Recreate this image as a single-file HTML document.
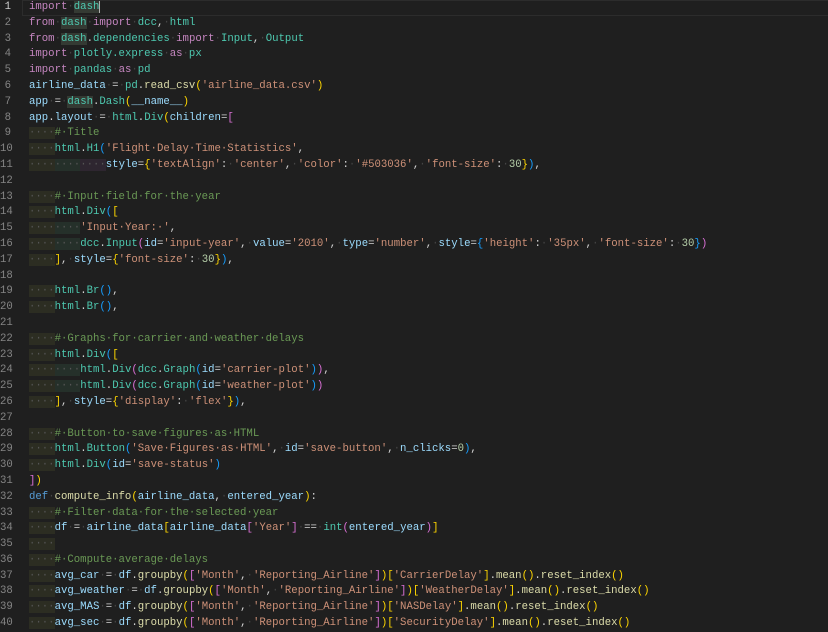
<!DOCTYPE html>
<html><head><meta charset="utf-8"><style>
body{margin:0;background:#1f1f1f;width:828px;height:630px;overflow:hidden;font-family:"Liberation Mono",monospace;font-size:10.67px;}
.g{position:absolute;left:0;top:0;width:11px;text-align:right;color:#858585;line-height:15.8px;white-space:pre}
.g div:first-child{color:#cccccc}
.code{position:absolute;left:29px;top:0;line-height:15.8px;white-space:pre;color:#d4d4d4}
.cur{position:absolute;left:22px;top:0;width:806px;height:14px;border:1px solid #2c2c2c}
.k{color:#c586c0}.m{color:#4ec9b0}.v{color:#9cdcfe}.f{color:#dcdcaa}.s{color:#ce9178}.c{color:#6a9955}.n{color:#b5cea8}.d{color:#569cd6}
.y{color:#ffd700}.p{color:#da70d6}.b{color:#179fff}.w{color:#454545}
.i1{background:#2c2d22;color:#555}.i2{background:#25302a;color:#555}.i3{background:#2e2630;color:#555}
.h{background:#343a33}
.cu{border-right:1px solid #aeafad}
</style></head><body>
<div class="cur"></div>
<div class="g"><div>1</div><div>2</div><div>3</div><div>4</div><div>5</div><div>6</div><div>7</div><div>8</div><div>9</div><div>10</div><div>11</div><div>12</div><div>13</div><div>14</div><div>15</div><div>16</div><div>17</div><div>18</div><div>19</div><div>20</div><div>21</div><div>22</div><div>23</div><div>24</div><div>25</div><div>26</div><div>27</div><div>28</div><div>29</div><div>30</div><div>31</div><div>32</div><div>33</div><div>34</div><div>35</div><div>36</div><div>37</div><div>38</div><div>39</div><div>40</div></div>
<div class="code"><div><span class="k">import</span><span class="w">·</span><span class="m h cu">dash</span></div><div><span class="k">from</span><span class="w">·</span><span class="m h">dash</span><span class="w">·</span><span class="k">import</span><span class="w">·</span><span class="m">dcc</span>,<span class="w">·</span><span class="m">html</span></div><div><span class="k">from</span><span class="w">·</span><span class="m h">dash</span>.<span class="m">dependencies</span><span class="w">·</span><span class="k">import</span><span class="w">·</span><span class="m">Input</span>,<span class="w">·</span><span class="m">Output</span></div><div><span class="k">import</span><span class="w">·</span><span class="m">plotly.express</span><span class="w">·</span><span class="k">as</span><span class="w">·</span><span class="m">px</span></div><div><span class="k">import</span><span class="w">·</span><span class="m">pandas</span><span class="w">·</span><span class="k">as</span><span class="w">·</span><span class="m">pd</span></div><div><span class="v">airline_data</span><span class="w">·</span>=<span class="w">·</span><span class="m">pd</span>.<span class="f">read_csv</span><span class="y">(</span><span class="s">'airline_data.csv'</span><span class="y">)</span></div><div><span class="v">app</span><span class="w">·</span>=<span class="w">·</span><span class="m h">dash</span>.<span class="m">Dash</span><span class="y">(</span><span class="v">__name__</span><span class="y">)</span></div><div><span class="v">app</span>.<span class="v">layout</span><span class="w">·</span>=<span class="w">·</span><span class="m">html</span>.<span class="m">Div</span><span class="y">(</span><span class="v">children</span>=<span class="p">[</span></div><div><span class="i1">····</span><span class="c">#·Title</span></div><div><span class="i1">····</span><span class="m">html</span>.<span class="m">H1</span><span class="b">(</span><span class="s">'Flight·Delay·Time·Statistics'</span>,</div><div><span class="i1">····</span><span class="i2">····</span><span class="i3">····</span><span class="v">style</span>=<span class="y">{</span><span class="s">'textAlign'</span>:<span class="w">·</span><span class="s">'center'</span>,<span class="w">·</span><span class="s">'color'</span>:<span class="w">·</span><span class="s">'#503036'</span>,<span class="w">·</span><span class="s">'font-size'</span>:<span class="w">·</span><span class="n">30</span><span class="y">}</span><span class="b">)</span>,</div><div> </div><div><span class="i1">····</span><span class="c">#·Input·field·for·the·year</span></div><div><span class="i1">····</span><span class="m">html</span>.<span class="m">Div</span><span class="b">(</span><span class="y">[</span></div><div><span class="i1">····</span><span class="i2">····</span><span class="s">'Input·Year:·'</span>,</div><div><span class="i1">····</span><span class="i2">····</span><span class="m">dcc</span>.<span class="m">Input</span><span class="p">(</span><span class="v">id</span>=<span class="s">'input-year'</span>,<span class="w">·</span><span class="v">value</span>=<span class="s">'2010'</span>,<span class="w">·</span><span class="v">type</span>=<span class="s">'number'</span>,<span class="w">·</span><span class="v">style</span>=<span class="b">{</span><span class="s">'height'</span>:<span class="w">·</span><span class="s">'35px'</span>,<span class="w">·</span><span class="s">'font-size'</span>:<span class="w">·</span><span class="n">30</span><span class="b">}</span><span class="p">)</span></div><div><span class="i1">····</span><span class="y">]</span>,<span class="w">·</span><span class="v">style</span>=<span class="y">{</span><span class="s">'font-size'</span>:<span class="w">·</span><span class="n">30</span><span class="y">}</span><span class="b">)</span>,</div><div> </div><div><span class="i1">····</span><span class="m">html</span>.<span class="m">Br</span><span class="b">()</span>,</div><div><span class="i1">····</span><span class="m">html</span>.<span class="m">Br</span><span class="b">()</span>,</div><div> </div><div><span class="i1">····</span><span class="c">#·Graphs·for·carrier·and·weather·delays</span></div><div><span class="i1">····</span><span class="m">html</span>.<span class="m">Div</span><span class="b">(</span><span class="y">[</span></div><div><span class="i1">····</span><span class="i2">····</span><span class="m">html</span>.<span class="m">Div</span><span class="p">(</span><span class="m">dcc</span>.<span class="m">Graph</span><span class="b">(</span><span class="v">id</span>=<span class="s">'carrier-plot'</span><span class="b">)</span><span class="p">)</span>,</div><div><span class="i1">····</span><span class="i2">····</span><span class="m">html</span>.<span class="m">Div</span><span class="p">(</span><span class="m">dcc</span>.<span class="m">Graph</span><span class="b">(</span><span class="v">id</span>=<span class="s">'weather-plot'</span><span class="b">)</span><span class="p">)</span></div><div><span class="i1">····</span><span class="y">]</span>,<span class="w">·</span><span class="v">style</span>=<span class="y">{</span><span class="s">'display'</span>:<span class="w">·</span><span class="s">'flex'</span><span class="y">}</span><span class="b">)</span>,</div><div> </div><div><span class="i1">····</span><span class="c">#·Button·to·save·figures·as·HTML</span></div><div><span class="i1">····</span><span class="m">html</span>.<span class="m">Button</span><span class="b">(</span><span class="s">'Save·Figures·as·HTML'</span>,<span class="w">·</span><span class="v">id</span>=<span class="s">'save-button'</span>,<span class="w">·</span><span class="v">n_clicks</span>=<span class="n">0</span><span class="b">)</span>,</div><div><span class="i1">····</span><span class="m">html</span>.<span class="m">Div</span><span class="b">(</span><span class="v">id</span>=<span class="s">'save-status'</span><span class="b">)</span></div><div><span class="p">]</span><span class="y">)</span></div><div><span class="d">def</span><span class="w">·</span><span class="f">compute_info</span><span class="y">(</span><span class="v">airline_data</span>,<span class="w">·</span><span class="v">entered_year</span><span class="y">)</span>:</div><div><span class="i1">····</span><span class="c">#·Filter·data·for·the·selected·year</span></div><div><span class="i1">····</span><span class="v">df</span><span class="w">·</span>=<span class="w">·</span><span class="v">airline_data</span><span class="y">[</span><span class="v">airline_data</span><span class="p">[</span><span class="s">'Year'</span><span class="p">]</span><span class="w">·</span>==<span class="w">·</span><span class="m">int</span><span class="p">(</span><span class="v">entered_year</span><span class="p">)</span><span class="y">]</span></div><div><span class="i1">····</span></div><div><span class="i1">····</span><span class="c">#·Compute·average·delays</span></div><div><span class="i1">····</span><span class="v">avg_car</span><span class="w">·</span>=<span class="w">·</span><span class="v">df</span>.<span class="f">groupby</span><span class="y">(</span><span class="p">[</span><span class="s">'Month'</span>,<span class="w">·</span><span class="s">'Reporting_Airline'</span><span class="p">]</span><span class="y">)[</span><span class="s">'CarrierDelay'</span><span class="y">]</span>.<span class="f">mean</span><span class="y">()</span>.<span class="f">reset_index</span><span class="y">()</span></div><div><span class="i1">····</span><span class="v">avg_weather</span><span class="w">·</span>=<span class="w">·</span><span class="v">df</span>.<span class="f">groupby</span><span class="y">(</span><span class="p">[</span><span class="s">'Month'</span>,<span class="w">·</span><span class="s">'Reporting_Airline'</span><span class="p">]</span><span class="y">)[</span><span class="s">'WeatherDelay'</span><span class="y">]</span>.<span class="f">mean</span><span class="y">()</span>.<span class="f">reset_index</span><span class="y">()</span></div><div><span class="i1">····</span><span class="v">avg_MAS</span><span class="w">·</span>=<span class="w">·</span><span class="v">df</span>.<span class="f">groupby</span><span class="y">(</span><span class="p">[</span><span class="s">'Month'</span>,<span class="w">·</span><span class="s">'Reporting_Airline'</span><span class="p">]</span><span class="y">)[</span><span class="s">'NASDelay'</span><span class="y">]</span>.<span class="f">mean</span><span class="y">()</span>.<span class="f">reset_index</span><span class="y">()</span></div><div><span class="i1">····</span><span class="v">avg_sec</span><span class="w">·</span>=<span class="w">·</span><span class="v">df</span>.<span class="f">groupby</span><span class="y">(</span><span class="p">[</span><span class="s">'Month'</span>,<span class="w">·</span><span class="s">'Reporting_Airline'</span><span class="p">]</span><span class="y">)[</span><span class="s">'SecurityDelay'</span><span class="y">]</span>.<span class="f">mean</span><span class="y">()</span>.<span class="f">reset_index</span><span class="y">()</span></div></div>
</body></html>
